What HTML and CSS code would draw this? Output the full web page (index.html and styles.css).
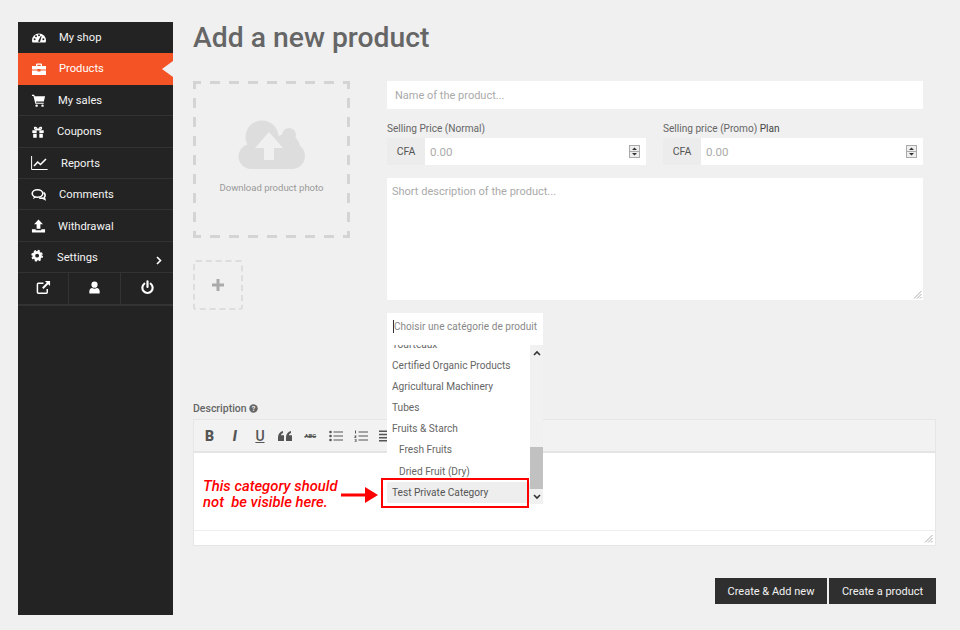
FILE: index.html
```html
<!DOCTYPE html>
<html lang="en">
<head>
<meta charset="utf-8">
<title>Add a new product</title>
<link rel="stylesheet" href="styles.css">
</head>
<body>
<div class="page">
  <nav class="sidebar">
    <a class="nav-row">
      <svg class="ico w16" viewBox="0 0 16 16"><path class="w" d="M1 10.500a7 7 0 1 1 14 0c0 .8-.2 1.400-.5 2H1.500c-.3-.6-.5-1.200-.5-2z"/><g class="hole"><circle cx="3.600" cy="9.300" r="1"/><circle cx="5" cy="6.300" r="1"/><circle cx="8" cy="5.200" r="1"/><circle cx="12.400" cy="9.300" r="1"/><path d="M7 11.500l2.800-5.500.8.3L9 12z"/></g></svg>
      <span>My shop</span>
    </a>
    <a class="nav-row active">
      <svg class="ico w16" viewBox="0 0 16 16"><path class="w" d="M1 5h14v3.500H9.500V8h-3v.5H1zM1 9.500h5.500v1h3v-1H15V14H1zM5 5V3.500a1 1 0 0 1 1-1h4a1 1 0 0 1 1 1V5H9.700V3.800H6.300V5z"/></svg>
      <span>Products</span>
    </a>
    <a class="nav-row">
      <svg class="ico w15" viewBox="0 0 16 16"><path class="w" d="M1 2.500h2.500l.4 1.500H15l-1.300 5.500H5.300l.3 1.300h8v1.200H4.600L2.600 3.700H1z"/><circle class="w" cx="6" cy="14" r="1.300"/><circle class="w" cx="12.300" cy="14" r="1.300"/></svg>
      <span>My sales</span>
    </a>
    <a class="nav-row">
      <svg class="ico w14" viewBox="0 0 16 16"><path class="w" d="M1.500 6h5v3h-5zM9.500 6h5v3h-5zM2.500 10h4v4.500h-4zM9.500 10h4v4.500h-4z"/><path class="bow" d="M7.500 5.500C5 5.500 4 4.800 4 3.500S6.500 2 7.500 5.500zM8.500 5.500c2.500 0 3.500-.7 3.500-2S9.500 2 8.500 5.500z"/></svg>
      <span>Coupons</span>
    </a>
    <a class="nav-row">
      <svg class="ico w18" viewBox="0 0 18 16"><path class="line" d="M.6 1v13.500h16"/><path class="line thick" d="M3 11l3.700-4 2.800 2.500L15 4"/></svg>
      <span>Reports</span>
    </a>
    <a class="nav-row">
      <svg class="ico w16" viewBox="0 0 16 16"><ellipse class="line thick" cx="6.500" cy="6.500" rx="5.300" ry="3.700"/><path class="line thick" d="M12.500 5.500c2 1.200 2 3.500.8 4.800l.5 2-2.500-1.200c-1 .2-2 .2-3 0"/><path class="w" d="M3 9.500l-1 2.500 3-1.500z"/></svg>
      <span>Comments</span>
    </a>
    <a class="nav-row">
      <svg class="ico w15" viewBox="0 0 16 16"><path class="w" d="M8 1l4.700 5H10v5H6V6H3.300zM1 11.500h4V12.500h6v-1h4V15H1z"/></svg>
      <span>Withdrawal</span>
    </a>
    <a class="nav-row settings">
      <svg class="ico w14" viewBox="0 0 16 16"><circle class="gear-ring" cx="7" cy="6.500" r="3.800"/><circle class="gear-teeth" cx="7" cy="6.500" r="5.800"/></svg>
      <span>Settings</span>
      <svg class="chev" viewBox="0 0 6 9"><path d="M1 1l3.500 3.500L1 8"/></svg>
    </a>
    <div class="nav-tools">
      <a class="tool"><svg viewBox="0 0 16 16"><path class="line thick" d="M8 3.500H2.500a1 1 0 0 0-1 1v8.500a1 1 0 0 0 1 1H11a1 1 0 0 0 1-1V9.500"/><path class="w" d="M9.500 1H15v5.500l-2-2-5 5-1.500-1.500 5-5z"/></svg></a>
      <a class="tool"><svg viewBox="0 0 16 16"><circle class="w" cx="8" cy="5" r="3.300"/><path class="w" d="M2.500 14.500v-2.500c0-2 1.300-3.500 3-3.500 1.500 1 3.500 1 5 0 1.700 0 3 1.500 3 3.500v2.500z"/></svg></a>
      <a class="tool"><svg viewBox="0 0 16 16"><path class="line heavy" d="M4.600 4a5.500 5.500 0 1 0 6.800 0"/><path class="line heavy" d="M8 1.500v6"/></svg></a>
    </div>
  </nav>

  <main class="main">
    <h1 class="title">Add a new product</h1>
    <div class="top">
      <div class="media">
        <div class="dropzone">
          <svg class="cloud" viewBox="0 0 67 49"><g class="cloud-body"><circle cx="24" cy="17" r="16.500"/><circle cx="51" cy="15" r="7"/><circle cx="48" cy="28" r="14"/><circle cx="13" cy="36.500" r="12.500"/><circle cx="54" cy="36" r="13"/><rect x="13" y="24" width="41" height="25"/></g><path class="cloud-arrow" d="M31 12l14 16h-9v12H26V28h-9z"/></svg>
          <span class="drop-text">Download product photo</span>
        </div>
        <div class="add-photo"><svg viewBox="0 0 12 12"><path d="M4.500 0h3v4.500H12v3H7.500V12h-3V7.500H0v-3h4.500z"/></svg></div>
      </div>
      <div class="fields">
        <input class="name-input" type="text" placeholder="Name of the product...">
        <div class="prices">
          <div class="price">
            <label class="field-label">Selling Price (Normal)</label>
            <div class="price-group">
              <span class="addon">CFA</span>
              <div class="price-box">
                <input class="price-input" type="text" placeholder="0.00">
                <svg class="spin" viewBox="0 0 11 13"><rect x=".5" y=".5" width="10" height="12"/><path class="spin-mid" d="M1 6.500h9"/><path class="spin-arrow" d="M5.500 2.500L8 5H3zM5.500 10.500L3 8h5z"/></svg>
              </div>
            </div>
          </div>
          <div class="price">
            <label class="field-label">Selling price (Promo) <span class="plan">Plan</span></label>
            <div class="price-group">
              <span class="addon">CFA</span>
              <div class="price-box">
                <input class="price-input" type="text" placeholder="0.00">
                <svg class="spin" viewBox="0 0 11 13"><rect x=".5" y=".5" width="10" height="12"/><path class="spin-mid" d="M1 6.500h9"/><path class="spin-arrow" d="M5.500 2.500L8 5H3zM5.500 10.500L3 8h5z"/></svg>
              </div>
            </div>
          </div>
        </div>
        <div class="short-wrap">
          <textarea class="short-desc" placeholder="Short description of the product..."></textarea>
          <svg class="grip short-grip" viewBox="0 0 9 9"><path d="M8.500 1L1 8.500M8.500 4L4 8.500M8.500 7L7 8.500"/></svg>
        </div>
        <div class="cat-select">
          <div class="cat-search"><span class="caret"></span>Choisir une catégorie de produit</div>
          <div class="cat-menu">
            <ul class="cat-list">
              <li class="cut">Tourteaux</li>
              <li>Certified Organic Products</li>
              <li>Agricultural Machinery</li>
              <li>Tubes</li>
              <li>Fruits &amp; Starch</li>
              <li class="sub">Fresh Fruits</li>
              <li class="sub">Dried Fruit (Dry)</li>
              <li class="hot">Test Private Category</li>
            </ul>
            <div class="scrollbar">
              <svg viewBox="0 0 8 6"><path d="M1 5l3-3 3 3"/></svg>
              <div class="thumb"></div>
              <svg viewBox="0 0 8 6"><path d="M1 1l3 3 3-3"/></svg>
            </div>
            <div class="red-box"></div>
          </div>
        </div>
      </div>
    </div>

    <div class="desc-label">Description <svg class="help" viewBox="0 0 10 10"><circle cx="5" cy="5" r="4.700"/><text x="5" y="7.800" text-anchor="middle">?</text></svg></div>
    <div class="editor">
      <div class="toolbar">
        <span class="tb tb-b">B</span>
        <span class="tb tb-i">I</span>
        <span class="tb tb-u">U</span>
        <span class="tb"><svg viewBox="0 0 14 10"><path d="M0 6.500C0 3 2 .8 5 0v2C3.700 2.500 3 3.300 3 4.200h3V10H0zM8 6.500C8 3 10 .8 13 0v2c-1.300.5-2 1.300-2 2.200h3V10H8z"/></svg></span>
        <span class="tb tb-abc">ABC</span>
        <span class="tb"><svg viewBox="0 0 14 12"><circle cx="1.500" cy="2" r="1.300"/><circle cx="1.500" cy="6" r="1.300"/><circle cx="1.500" cy="10" r="1.300"/><path d="M4.500 1.500H14v1H4.500zM4.500 5.500H14v1H4.500zM4.500 9.500H14v1H4.500z"/></svg></span>
        <span class="tb"><svg viewBox="0 0 14 12"><path d="M1 .5h1v3H1zM.5 5.500h2v.8l-1 1.200h1v.6H.3V7.500l1-1.200H.5zM.5 9h2v3H.5v-.6h1.200V10.800H1v-.5h.7v-.7H.5z"/><path d="M4.500 1.500H14v1H4.500zM4.500 5.500H14v1H4.500zM4.500 9.500H14v1H4.500z"/></svg></span>
        <span class="tb"><svg viewBox="0 0 14 12"><path d="M0 .5h14v1.500H0zM0 3.700h14v1.500H0zM0 6.900h14v1.500H0zM0 10h14v1.500H0z"/></svg></span>
      </div>
      <div class="editor-body">
        <div class="note">
          <p class="note-text">This category should
not  be visible here.</p>
          <svg class="note-arrow" viewBox="0 0 37 16"><path d="M0 6.500h24V0l13 8-13 8V9.500H0z"/></svg>
        </div>
      </div>
      <div class="editor-foot"><svg class="grip" viewBox="0 0 9 9"><path d="M8.500 1L1 8.500M8.500 4L4 8.500M8.500 7L7 8.500"/></svg></div>
    </div>
    <div class="actions">
      <button class="btn" type="button">Create &amp; Add new</button>
      <button class="btn" type="button">Create a product</button>
    </div>
  </main>
</div>
</body>
</html>
```

FILE: styles.css
```css
* { box-sizing: border-box; }
html, body { margin: 0; height: 100%; }
body {
  background: #f0f0f0;
  font-family: Roboto, "Liberation Sans", sans-serif;
  color: #666;
  overflow: hidden;
}
.page {
  display: flex;
  align-items: flex-start;
  padding: 22px 0 0 18px;
}

/* Sidebar */
.sidebar {
  flex: none;
  width: 155px;
  height: 593px;
  background: #232323;
  color: #f4f4f4;
  font-size: 11.2px;
}
.nav-row {
  display: flex;
  align-items: center;
  gap: 12px;
  height: 31.4px;
  padding: 1px 0 0 13px;
  position: relative;
  border-bottom: 1px solid #333;
}
.nav-row:nth-child(1) { border-bottom: 0; padding-top: 0; }
.nav-row.active {
  background: #f45325;
  color: #fff;
  padding-top: 0;
  border-bottom: 1px solid transparent;
}
.nav-row.active::after {
  content: "";
  position: absolute;
  right: 0;
  top: 8px;
  border: 8px solid transparent;
  border-left: 0;
  border-right: 11px solid #f0f0f0;
}
.ico { flex: none; height: 16px; overflow: visible; }
.w14 { width: 14px; }
.w15 { width: 15px; }
.w16 { width: 16px; }
.w18 { width: 18px; }
.w { fill: #fff; }
.hole { fill: #232323; }
.bow { fill: none; stroke: #fff; stroke-width: 1.500; }
.line { fill: none; stroke: #fff; stroke-width: 1; }
.line.thick { stroke-width: 1.600; }
.line.heavy { stroke-width: 2.300; stroke-linecap: round; }
.gear-ring { fill: none; stroke: #fff; stroke-width: 3.200; }
.gear-teeth { fill: none; stroke: #fff; stroke-width: 1.800; stroke-dasharray: 2.500 2.050; }
.chev {
  position: absolute;
  right: 11px;
  top: 14px;
  width: 6px;
  height: 9px;
  fill: none;
  stroke: #fff;
  stroke-width: 1.600;
}
.nav-tools {
  display: grid;
  grid-template-columns: 51px 52px 52px;
  height: 33px;
  border-bottom: 2px solid #333;
}
.tool {
  display: flex;
  align-items: center;
  justify-content: center;
  border-right: 1px solid #333;
}
.tool:last-child { border-right: 0; }
.tool svg { width: 15px; height: 15px; margin-bottom: 3px; }

/* Main */
.main {
  flex: none;
  width: 743px;
  margin-left: 20px;
}
.title {
  margin: 0;
  height: 59px;
  padding-top: 1px;
  line-height: 30px;
  font-size: 28.3px;
  font-weight: 500;
  color: #666;
}
.top {
  display: flex;
  gap: 37px;
}
.media { flex: none; width: 157px; }
.dropzone {
  display: flex;
  flex-direction: column;
  align-items: center;
  height: 157px;
  padding-top: 39px;
  --dash-h: linear-gradient(90deg, #d4d4d4 8px, transparent 8px, transparent 17px, #d4d4d4 17px);
  --dash-v: linear-gradient(180deg, #d4d4d4 8px, transparent 8px, transparent 17px, #d4d4d4 17px);
  background-image: var(--dash-h), var(--dash-h), var(--dash-v), var(--dash-v);
  background-size: 19px 3px, 19px 3px, 3px 19px, 3px 19px;
  background-position: 0 0, 0 100%, 0 0, 100% 0;
  background-repeat: repeat-x, repeat-x, repeat-y, repeat-y;
}
.cloud { flex: none; width: 67px; height: 49px; }
.cloud-body { fill: #ddd; }
.cloud-arrow { fill: #f0f0f0; }
.drop-text { margin-top: 13px; font-size: 9.5px; color: #999; }
.add-photo {
  display: flex;
  align-items: center;
  justify-content: center;
  width: 50px;
  height: 50px;
  margin-top: 22px;
  border: 2px dashed #ddd;
  border-radius: 3px;
}
.add-photo svg { width: 12px; height: 12px; fill: #aaa; }

.fields { flex: none; width: 536px; }
input, textarea {
  border: 0;
  outline: 0;
  background: #fff;
  font-family: inherit;
  color: #666;
}
input::placeholder, textarea::placeholder { color: #aaa; opacity: 1; }
.name-input {
  display: block;
  width: 100%;
  height: 28px;
  padding: 0 8px;
  font-size: 11px;
}
.prices {
  display: grid;
  grid-template-columns: 259px 260px;
  gap: 17px;
  margin-top: 12px;
}
.field-label {
  display: block;
  height: 17px;
  line-height: 16px;
  font-size: 10.1px;
  color: #666;
}
.plan { color: #444; }
.price-group { display: flex; height: 27px; }
.addon {
  flex: none;
  width: 38px;
  line-height: 27px;
  text-align: center;
  font-size: 10.5px;
  color: #555;
  background: #ececec;
}
.price-box {
  flex: 1;
  display: flex;
  align-items: center;
  padding-right: 6px;
  background: #fff;
}
.price-input {
  flex: 1;
  min-width: 0;
  height: 100%;
  padding: 0 5px;
  font-size: 11.5px;
}
.spin { flex: none; width: 11px; height: 13px; }
.spin rect { fill: #eee; stroke: #aaa; stroke-width: 1; }
.spin-mid { stroke: #aaa; stroke-width: 1; }
.spin-arrow { fill: #333; }
.short-wrap {
  position: relative;
  height: 122px;
  margin-top: 13px;
}
.short-desc {
  display: block;
  width: 100%;
  height: 100%;
  padding: 7px 5px;
  font-size: 11px;
  resize: none;
}
.grip { width: 9px; height: 9px; fill: none; stroke: #aaa; stroke-width: 1; }
.short-grip { position: absolute; right: 1px; bottom: 1px; }
.cat-select {
  position: relative;
  width: 156px;
  height: 32px;
  margin-top: 13px;
}
.cat-search {
  height: 32px;
  line-height: 27px;
  padding-left: 6px;
  background: #fff;
  font-size: 10px;
  letter-spacing: .05px;
  color: #888;
  white-space: nowrap;
}
.caret {
  display: inline-block;
  width: 1px;
  height: 13px;
  vertical-align: -3px;
  background: #333;
}
.cat-menu {
  position: absolute;
  left: 0;
  top: 32px;
  z-index: 3;
  display: flex;
  width: 156px;
  height: 159px;
  background: #fff;
}
.cat-list {
  flex: 1;
  margin: 0;
  padding: 0;
  list-style: none;
  overflow: hidden;
  font-size: 10.15px;
  color: #666;
}
.cat-list li {
  height: 21.2px;
  line-height: 21.2px;
  padding-left: 5px;
  white-space: nowrap;
}
.cat-list .cut { margin-top: -11.5px; }
.cat-list .sub { padding-left: 12px; }
.cat-list .hot { background: #eee; color: #555; border-radius: 2px; }
.scrollbar {
  flex: none;
  display: flex;
  flex-direction: column;
  align-items: center;
  width: 13px;
  background: #f1f1f1;
}
.scrollbar svg {
  flex: none;
  width: 8px;
  height: 6px;
  margin: 5px 0;
  fill: none;
  stroke: #333;
  stroke-width: 1.600;
}
.thumb {
  flex: none;
  width: 13px;
  height: 42px;
  margin-top: 86px;
  background: #c1c1c1;
}
.red-box {
  position: absolute;
  left: -6px;
  top: 133px;
  width: 148px;
  height: 30px;
  border: 2px solid #f00;
  pointer-events: none;
}

/* Editor */
.desc-label {
  display: flex;
  align-items: center;
  gap: 2px;
  margin-top: 55px;
  height: 16px;
  font-size: 10.5px;
  font-weight: 500;
  color: #666;
}
.help { width: 9px; height: 9px; }
.help circle { fill: #666; }
.help text { fill: #f0f0f0; font-size: 8px; font-weight: 700; }
.editor {
  margin-top: 3px;
  height: 127px;
  display: flex;
  flex-direction: column;
  border: 1px solid #e6e6e6;
  background: #fff;
}
.toolbar {
  flex: none;
  display: grid;
  grid-template-columns: repeat(8, 25.2px);
  align-items: center;
  height: 33px;
  padding-left: 3px;
  background: #f2f2f2;
  border-bottom: 2px solid #e4e4e4;
  color: #555;
}
.tb {
  display: flex;
  justify-content: center;
  align-items: center;
  font-size: 14px;
  font-weight: 700;
}
.tb svg { width: 14px; height: 12px; fill: #555; }
.tb-b { font-weight: 900; }
.tb-i { font-style: italic; font-weight: 900; }
.tb-u { text-decoration: underline; font-weight: 500; }
.tb-abc { font-size: 6px; text-decoration: line-through; }
.editor-body { flex: 1; position: relative; }
.note {
  position: absolute;
  left: 9px;
  top: 26px;
  display: flex;
  align-items: center;
  gap: 3px;
}
.note-text {
  margin: 0;
  white-space: pre;
  font-size: 14.8px;
  line-height: 15.5px;
  font-style: italic;
  font-weight: 500;
  color: #f00;
}
.note-arrow { flex: none; width: 37px; height: 16px; fill: #f00; }
.editor-foot {
  flex: none;
  display: flex;
  align-items: flex-end;
  justify-content: flex-end;
  height: 15px;
  padding: 0 2px 2px 0;
  border-top: 1px solid #eee;
}
.actions {
  display: flex;
  justify-content: flex-end;
  gap: 2px;
  margin-top: 32px;
}
.btn {
  height: 26px;
  padding: 0;
  border: 0;
  background: #2f2f2f;
  color: #f2f2f2;
  font-family: inherit;
  font-size: 11px;
}
.btn:first-child { width: 112px; }
.btn:last-child { width: 107px; }
```
